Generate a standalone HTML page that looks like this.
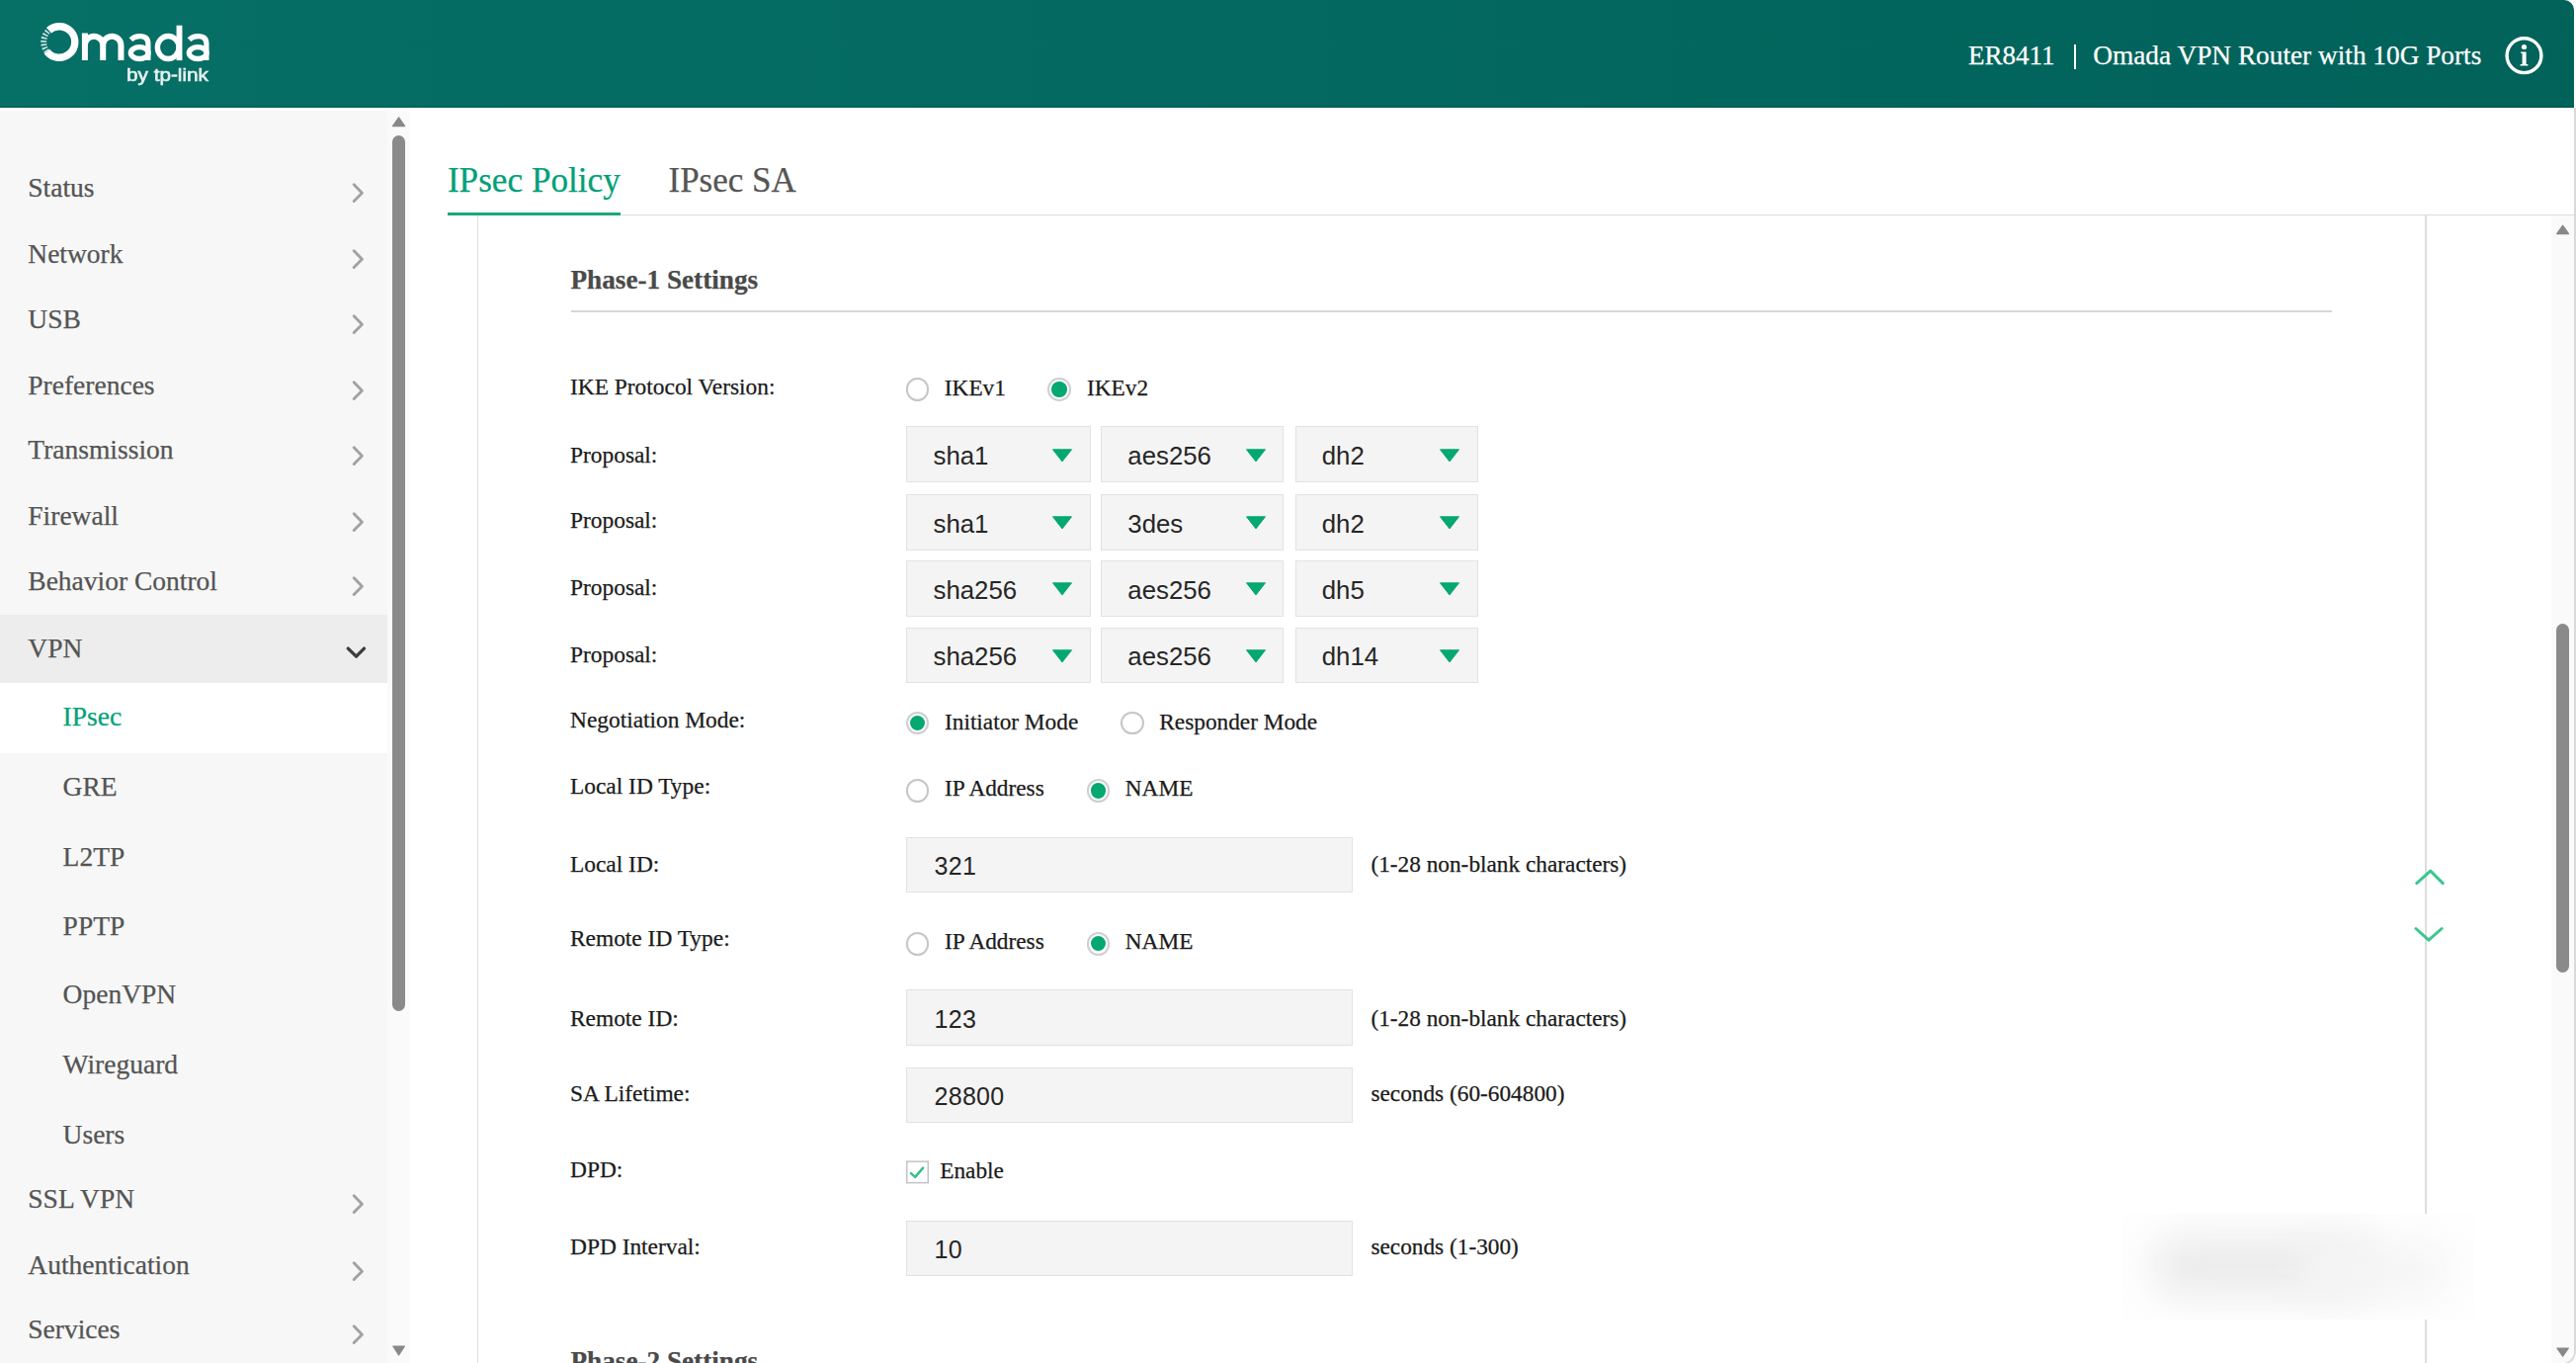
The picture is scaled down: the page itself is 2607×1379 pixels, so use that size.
<!DOCTYPE html>
<html><head><meta charset="utf-8"><title>Omada IPsec</title>
<style>
html,body{margin:0;padding:0;width:2607px;height:1379px;overflow:hidden;background:#fff}
.t{position:absolute;white-space:nowrap;-webkit-text-stroke:0.25px currentColor}
.b{position:absolute}
</style></head><body>
<div class="b" style="left:0.00px;top:0.00px;width:2607.00px;height:1379.00px;background:#fff"></div>
<div class="b" style="left:0.00px;top:0.00px;width:2605.00px;height:109.40px;background:linear-gradient(to right,#066f66,#01625a);border-top-right-radius:10px"></div>
<div class="b" style="left:0.00px;top:107.20px;width:2605.00px;height:2.20px;background:rgba(0,50,40,0.13)"></div>
<svg class="b" style="left:0;top:0" width="240" height="109" viewBox="0 0 240 109">
<g fill="none" stroke="#fff">
 <path d="M 49.43 30.76 A 15.8 15.8 0 1 1 47.55 52.23" stroke-width="7.4"/>
 <path d="M 47.55 52.23 A 15.8 15.8 0 0 1 49.43 30.76" stroke-width="6.0" stroke-dasharray="1.7 1.7" opacity="0.8"/>
 <path d="M 85.9 61.1 V 33.4 M 85.9 45.8 A 9.15 9.15 0 0 1 104.2 45.8 V 61.1 M 104.2 45.8 A 9.12 9.12 0 0 1 122.45 45.8 V 61.1" stroke-width="6.0"/>
 <path d="M 132.4 40.2 Q 136 36.7 141.5 36.7 Q 149.9 36.7 149.9 44.5 V 61.1" stroke-width="5.2"/>
 <ellipse cx="141.2" cy="53.6" rx="8.9" ry="5.9" stroke-width="5.3"/>
 <ellipse cx="170.2" cy="48.0" rx="10.8" ry="11.5" stroke-width="5.4"/>
 <path d="M 181.5 25.7 V 61.1" stroke-width="5.9"/>
 <path d="M 191.4 40.2 Q 195 36.7 200.5 36.7 Q 208.9 36.7 208.9 44.5 V 61.1" stroke-width="5.2"/>
 <ellipse cx="200.2" cy="53.6" rx="8.9" ry="5.9" stroke-width="5.3"/>
</g>
<text x="128" y="82.3" font-family="Liberation Sans, sans-serif" font-size="18" font-weight="normal" fill="#fff" stroke="#fff" stroke-width="0.6" textLength="83" lengthAdjust="spacingAndGlyphs" opacity="0.9">by tp-link</text>
</svg>
<div class="t" style="left:1992.00px;top:42.99px;font-size:27.0px;line-height:27.0px;color:#fff;font-family:'Liberation Serif', serif;font-weight:normal;">ER8411</div>
<div class="b" style="left:2099.30px;top:45.40px;width:2.00px;height:24.60px;background:#fff"></div>
<div class="t" style="left:2118.30px;top:42.74px;font-size:27.3px;line-height:27.3px;color:#fff;font-family:'Liberation Serif', serif;font-weight:normal;">Omada VPN Router with 10G Ports</div>
<svg class="b" style="left:2530px;top:32px" width="50" height="50" viewBox="0 0 50 50">
<circle cx="24.5" cy="24.2" r="17.4" fill="none" stroke="#fff" stroke-width="3.4"/>
<circle cx="24.5" cy="15.5" r="2.6" fill="#fff"/>
<path d="M 21.2 20.6 H 26.6 V 33.1 H 28.4 V 34.6 H 20.6 V 33.1 H 22.6 V 22.1 H 21.2 Z" fill="#fff"/>
</svg>
<div class="b" style="left:0.00px;top:112.00px;width:392.00px;height:1267.00px;background:#f7f7f7"></div>
<div class="b" style="left:392.00px;top:112.00px;width:23.00px;height:1267.00px;background:#fafafa"></div>
<div class="t" style="left:28.30px;top:176.17px;font-size:27.5px;line-height:27.5px;color:#545454;font-family:'Liberation Serif', serif;font-weight:normal;">Status</div>
<svg class="b" style="left:350px;top:181.30px" width="24" height="28" viewBox="0 0 24 28"><path d="M 8.2 5.7 L 16.4 14.2 L 8.2 22.5" fill="none" stroke="#a2a2a2" stroke-width="2.9" stroke-linecap="round" stroke-linejoin="round"/></svg>
<div class="t" style="left:28.30px;top:243.07px;font-size:27.5px;line-height:27.5px;color:#545454;font-family:'Liberation Serif', serif;font-weight:normal;">Network</div>
<svg class="b" style="left:350px;top:248.20px" width="24" height="28" viewBox="0 0 24 28"><path d="M 8.2 5.7 L 16.4 14.2 L 8.2 22.5" fill="none" stroke="#a2a2a2" stroke-width="2.9" stroke-linecap="round" stroke-linejoin="round"/></svg>
<div class="t" style="left:28.30px;top:308.77px;font-size:27.5px;line-height:27.5px;color:#545454;font-family:'Liberation Serif', serif;font-weight:normal;">USB</div>
<svg class="b" style="left:350px;top:313.90px" width="24" height="28" viewBox="0 0 24 28"><path d="M 8.2 5.7 L 16.4 14.2 L 8.2 22.5" fill="none" stroke="#a2a2a2" stroke-width="2.9" stroke-linecap="round" stroke-linejoin="round"/></svg>
<div class="t" style="left:28.30px;top:375.67px;font-size:27.5px;line-height:27.5px;color:#545454;font-family:'Liberation Serif', serif;font-weight:normal;">Preferences</div>
<svg class="b" style="left:350px;top:380.80px" width="24" height="28" viewBox="0 0 24 28"><path d="M 8.2 5.7 L 16.4 14.2 L 8.2 22.5" fill="none" stroke="#a2a2a2" stroke-width="2.9" stroke-linecap="round" stroke-linejoin="round"/></svg>
<div class="t" style="left:28.30px;top:441.47px;font-size:27.5px;line-height:27.5px;color:#545454;font-family:'Liberation Serif', serif;font-weight:normal;">Transmission</div>
<svg class="b" style="left:350px;top:446.60px" width="24" height="28" viewBox="0 0 24 28"><path d="M 8.2 5.7 L 16.4 14.2 L 8.2 22.5" fill="none" stroke="#a2a2a2" stroke-width="2.9" stroke-linecap="round" stroke-linejoin="round"/></svg>
<div class="t" style="left:28.30px;top:508.37px;font-size:27.5px;line-height:27.5px;color:#545454;font-family:'Liberation Serif', serif;font-weight:normal;">Firewall</div>
<svg class="b" style="left:350px;top:513.50px" width="24" height="28" viewBox="0 0 24 28"><path d="M 8.2 5.7 L 16.4 14.2 L 8.2 22.5" fill="none" stroke="#a2a2a2" stroke-width="2.9" stroke-linecap="round" stroke-linejoin="round"/></svg>
<div class="t" style="left:28.30px;top:573.67px;font-size:27.5px;line-height:27.5px;color:#545454;font-family:'Liberation Serif', serif;font-weight:normal;">Behavior Control</div>
<svg class="b" style="left:350px;top:578.80px" width="24" height="28" viewBox="0 0 24 28"><path d="M 8.2 5.7 L 16.4 14.2 L 8.2 22.5" fill="none" stroke="#a2a2a2" stroke-width="2.9" stroke-linecap="round" stroke-linejoin="round"/></svg>
<div class="b" style="left:0.00px;top:621.50px;width:392.00px;height:69.80px;background:#ededed"></div>
<div class="t" style="left:28.30px;top:641.67px;font-size:27.5px;line-height:27.5px;color:#545454;font-family:'Liberation Serif', serif;font-weight:normal;">VPN</div>
<svg class="b" style="left:340px;top:640px" width="40" height="40" viewBox="0 0 40 40"><path d="M 12.3 16.1 L 20.5 24.1 L 28.5 16.1" fill="none" stroke="#3d3d3d" stroke-width="3.4" stroke-linecap="round" stroke-linejoin="round"/></svg>
<div class="b" style="left:0.00px;top:691.30px;width:392.00px;height:70.40px;background:#fff"></div>
<div class="t" style="left:63.60px;top:710.97px;font-size:27.5px;line-height:27.5px;color:#00a27a;font-family:'Liberation Serif', serif;font-weight:normal;">IPsec</div>
<div class="t" style="left:63.60px;top:781.87px;font-size:27.5px;line-height:27.5px;color:#545454;font-family:'Liberation Serif', serif;font-weight:normal;">GRE</div>
<div class="t" style="left:63.60px;top:852.57px;font-size:27.5px;line-height:27.5px;color:#545454;font-family:'Liberation Serif', serif;font-weight:normal;">L2TP</div>
<div class="t" style="left:63.60px;top:922.97px;font-size:27.5px;line-height:27.5px;color:#545454;font-family:'Liberation Serif', serif;font-weight:normal;">PPTP</div>
<div class="t" style="left:63.60px;top:992.27px;font-size:27.5px;line-height:27.5px;color:#545454;font-family:'Liberation Serif', serif;font-weight:normal;">OpenVPN</div>
<div class="t" style="left:63.60px;top:1062.67px;font-size:27.5px;line-height:27.5px;color:#545454;font-family:'Liberation Serif', serif;font-weight:normal;">Wireguard</div>
<div class="t" style="left:63.60px;top:1133.57px;font-size:27.5px;line-height:27.5px;color:#545454;font-family:'Liberation Serif', serif;font-weight:normal;">Users</div>
<div class="t" style="left:28.30px;top:1199.07px;font-size:27.5px;line-height:27.5px;color:#545454;font-family:'Liberation Serif', serif;font-weight:normal;">SSL VPN</div>
<svg class="b" style="left:350px;top:1204.40px" width="24" height="28" viewBox="0 0 24 28"><path d="M 8.2 5.7 L 16.4 14.2 L 8.2 22.5" fill="none" stroke="#a2a2a2" stroke-width="2.9" stroke-linecap="round" stroke-linejoin="round"/></svg>
<div class="t" style="left:28.30px;top:1266.17px;font-size:27.5px;line-height:27.5px;color:#545454;font-family:'Liberation Serif', serif;font-weight:normal;">Authentication</div>
<svg class="b" style="left:350px;top:1271.50px" width="24" height="28" viewBox="0 0 24 28"><path d="M 8.2 5.7 L 16.4 14.2 L 8.2 22.5" fill="none" stroke="#a2a2a2" stroke-width="2.9" stroke-linecap="round" stroke-linejoin="round"/></svg>
<div class="t" style="left:28.30px;top:1331.07px;font-size:27.5px;line-height:27.5px;color:#545454;font-family:'Liberation Serif', serif;font-weight:normal;">Services</div>
<svg class="b" style="left:350px;top:1336.40px" width="24" height="28" viewBox="0 0 24 28"><path d="M 8.2 5.7 L 16.4 14.2 L 8.2 22.5" fill="none" stroke="#a2a2a2" stroke-width="2.9" stroke-linecap="round" stroke-linejoin="round"/></svg>
<svg class="b" style="left:392px;top:112px" width="23" height="1267" viewBox="0 0 23 1267"><path d="M 5.5 15.6 L 11.6 6.8 L 17.7 15.6 Z" fill="#888" stroke="#888" stroke-width="1.2" stroke-linejoin="round"/><path d="M 5.8 1250 L 11.6 1259 L 17.4 1250 Z" fill="#888" stroke="#888" stroke-width="1.2" stroke-linejoin="round"/></svg>
<div class="b" style="left:396.80px;top:137.30px;width:13.70px;height:885.30px;background:#8a8a8a;border-radius:7px"></div>
<div class="t" style="left:452.90px;top:165.22px;font-size:35.2px;line-height:35.2px;color:#00a07a;font-family:'Liberation Serif', serif;font-weight:normal;">IPsec Policy</div>
<div class="t" style="left:676.50px;top:165.39px;font-size:35.0px;line-height:35.0px;color:#555;font-family:'Liberation Serif', serif;font-weight:normal;">IPsec SA</div>
<div class="b" style="left:452.90px;top:216.80px;width:2152.10px;height:1.50px;background:#ddd"></div>
<div class="b" style="left:452.90px;top:215.00px;width:174.80px;height:2.80px;background:#1aa87a"></div>
<div class="b" style="left:482.60px;top:218.30px;width:1.80px;height:1160.70px;background:#dedede"></div>
<div class="b" style="left:2454.00px;top:218.30px;width:1.80px;height:1160.70px;background:#dedede"></div>
<div class="t" style="left:577.50px;top:270.02px;font-size:27.2px;line-height:27.2px;color:#4a4a4a;font-family:'Liberation Serif', serif;font-weight:bold;">Phase-1 Settings</div>
<div class="b" style="left:577.50px;top:313.60px;width:1782.50px;height:2.00px;background:#d7d7d7"></div>
<div class="t" style="left:577.00px;top:379.90px;font-size:23.4px;line-height:23.4px;color:#1b1b1b;font-family:'Liberation Serif', serif;font-weight:normal;">IKE Protocol Version:</div>
<div class="b" style="left:916.80px;top:382.40px;width:19.6px;height:19.6px;border:2px solid #c6c6c6;border-radius:50%;background:#fff"></div>
<div class="t" style="left:955.80px;top:380.99px;font-size:23.3px;line-height:23.3px;color:#1b1b1b;font-family:'Liberation Serif', serif;font-weight:normal;">IKEv1</div>
<div class="b" style="left:1060.40px;top:382.40px;width:19.6px;height:19.6px;border:2px solid #cfcfcf;border-radius:50%;background:#fff"><div class="b" style="left:2.1px;top:2.1px;width:15.4px;height:15.4px;border-radius:50%;background:#04a870"></div></div>
<div class="t" style="left:1100.00px;top:380.99px;font-size:23.3px;line-height:23.3px;color:#1b1b1b;font-family:'Liberation Serif', serif;font-weight:normal;">IKEv2</div>
<div class="t" style="left:577.00px;top:448.60px;font-size:23.4px;line-height:23.4px;color:#1b1b1b;font-family:'Liberation Serif', serif;font-weight:normal;">Proposal:</div>
<div class="b" style="left:917.40px;top:431.30px;width:186.40px;height:56.60px;background:#f4f4f4;border:1.3px solid #e2e2e2;box-sizing:border-box"></div>
<div class="t" style="left:944.50px;top:449.06px;font-size:25.8px;line-height:25.8px;color:#262626;font-family:'Liberation Sans', sans-serif;font-weight:normal;-webkit-text-stroke:0;">sha1</div>
<svg class="b" style="left:1064.30px;top:452.50px" width="22" height="16" viewBox="0 0 22 16"><path d="M 1.5 1.8 L 20.5 1.8 L 11 13.9 Z" fill="#04a870" stroke="#04a870" stroke-width="1" stroke-linejoin="round"/></svg>
<div class="b" style="left:1114.20px;top:431.30px;width:184.90px;height:56.60px;background:#f4f4f4;border:1.3px solid #e2e2e2;box-sizing:border-box"></div>
<div class="t" style="left:1141.30px;top:449.06px;font-size:25.8px;line-height:25.8px;color:#262626;font-family:'Liberation Sans', sans-serif;font-weight:normal;-webkit-text-stroke:0;">aes256</div>
<svg class="b" style="left:1259.60px;top:452.50px" width="22" height="16" viewBox="0 0 22 16"><path d="M 1.5 1.8 L 20.5 1.8 L 11 13.9 Z" fill="#04a870" stroke="#04a870" stroke-width="1" stroke-linejoin="round"/></svg>
<div class="b" style="left:1310.60px;top:431.30px;width:185.10px;height:56.60px;background:#f4f4f4;border:1.3px solid #e2e2e2;box-sizing:border-box"></div>
<div class="t" style="left:1337.70px;top:449.06px;font-size:25.8px;line-height:25.8px;color:#262626;font-family:'Liberation Sans', sans-serif;font-weight:normal;-webkit-text-stroke:0;">dh2</div>
<svg class="b" style="left:1456.20px;top:452.50px" width="22" height="16" viewBox="0 0 22 16"><path d="M 1.5 1.8 L 20.5 1.8 L 11 13.9 Z" fill="#04a870" stroke="#04a870" stroke-width="1" stroke-linejoin="round"/></svg>
<div class="t" style="left:577.00px;top:515.40px;font-size:23.4px;line-height:23.4px;color:#1b1b1b;font-family:'Liberation Serif', serif;font-weight:normal;">Proposal:</div>
<div class="b" style="left:917.40px;top:500.10px;width:186.40px;height:56.60px;background:#f4f4f4;border:1.3px solid #e2e2e2;box-sizing:border-box"></div>
<div class="t" style="left:944.50px;top:517.86px;font-size:25.8px;line-height:25.8px;color:#262626;font-family:'Liberation Sans', sans-serif;font-weight:normal;-webkit-text-stroke:0;">sha1</div>
<svg class="b" style="left:1064.30px;top:521.30px" width="22" height="16" viewBox="0 0 22 16"><path d="M 1.5 1.8 L 20.5 1.8 L 11 13.9 Z" fill="#04a870" stroke="#04a870" stroke-width="1" stroke-linejoin="round"/></svg>
<div class="b" style="left:1114.20px;top:500.10px;width:184.90px;height:56.60px;background:#f4f4f4;border:1.3px solid #e2e2e2;box-sizing:border-box"></div>
<div class="t" style="left:1141.30px;top:517.86px;font-size:25.8px;line-height:25.8px;color:#262626;font-family:'Liberation Sans', sans-serif;font-weight:normal;-webkit-text-stroke:0;">3des</div>
<svg class="b" style="left:1259.60px;top:521.30px" width="22" height="16" viewBox="0 0 22 16"><path d="M 1.5 1.8 L 20.5 1.8 L 11 13.9 Z" fill="#04a870" stroke="#04a870" stroke-width="1" stroke-linejoin="round"/></svg>
<div class="b" style="left:1310.60px;top:500.10px;width:185.10px;height:56.60px;background:#f4f4f4;border:1.3px solid #e2e2e2;box-sizing:border-box"></div>
<div class="t" style="left:1337.70px;top:517.86px;font-size:25.8px;line-height:25.8px;color:#262626;font-family:'Liberation Sans', sans-serif;font-weight:normal;-webkit-text-stroke:0;">dh2</div>
<svg class="b" style="left:1456.20px;top:521.30px" width="22" height="16" viewBox="0 0 22 16"><path d="M 1.5 1.8 L 20.5 1.8 L 11 13.9 Z" fill="#04a870" stroke="#04a870" stroke-width="1" stroke-linejoin="round"/></svg>
<div class="t" style="left:577.00px;top:583.10px;font-size:23.4px;line-height:23.4px;color:#1b1b1b;font-family:'Liberation Serif', serif;font-weight:normal;">Proposal:</div>
<div class="b" style="left:917.40px;top:567.20px;width:186.40px;height:56.60px;background:#f4f4f4;border:1.3px solid #e2e2e2;box-sizing:border-box"></div>
<div class="t" style="left:944.50px;top:584.96px;font-size:25.8px;line-height:25.8px;color:#262626;font-family:'Liberation Sans', sans-serif;font-weight:normal;-webkit-text-stroke:0;">sha256</div>
<svg class="b" style="left:1064.30px;top:588.40px" width="22" height="16" viewBox="0 0 22 16"><path d="M 1.5 1.8 L 20.5 1.8 L 11 13.9 Z" fill="#04a870" stroke="#04a870" stroke-width="1" stroke-linejoin="round"/></svg>
<div class="b" style="left:1114.20px;top:567.20px;width:184.90px;height:56.60px;background:#f4f4f4;border:1.3px solid #e2e2e2;box-sizing:border-box"></div>
<div class="t" style="left:1141.30px;top:584.96px;font-size:25.8px;line-height:25.8px;color:#262626;font-family:'Liberation Sans', sans-serif;font-weight:normal;-webkit-text-stroke:0;">aes256</div>
<svg class="b" style="left:1259.60px;top:588.40px" width="22" height="16" viewBox="0 0 22 16"><path d="M 1.5 1.8 L 20.5 1.8 L 11 13.9 Z" fill="#04a870" stroke="#04a870" stroke-width="1" stroke-linejoin="round"/></svg>
<div class="b" style="left:1310.60px;top:567.20px;width:185.10px;height:56.60px;background:#f4f4f4;border:1.3px solid #e2e2e2;box-sizing:border-box"></div>
<div class="t" style="left:1337.70px;top:584.96px;font-size:25.8px;line-height:25.8px;color:#262626;font-family:'Liberation Sans', sans-serif;font-weight:normal;-webkit-text-stroke:0;">dh5</div>
<svg class="b" style="left:1456.20px;top:588.40px" width="22" height="16" viewBox="0 0 22 16"><path d="M 1.5 1.8 L 20.5 1.8 L 11 13.9 Z" fill="#04a870" stroke="#04a870" stroke-width="1" stroke-linejoin="round"/></svg>
<div class="t" style="left:577.00px;top:651.20px;font-size:23.4px;line-height:23.4px;color:#1b1b1b;font-family:'Liberation Serif', serif;font-weight:normal;">Proposal:</div>
<div class="b" style="left:917.40px;top:634.60px;width:186.40px;height:56.60px;background:#f4f4f4;border:1.3px solid #e2e2e2;box-sizing:border-box"></div>
<div class="t" style="left:944.50px;top:652.36px;font-size:25.8px;line-height:25.8px;color:#262626;font-family:'Liberation Sans', sans-serif;font-weight:normal;-webkit-text-stroke:0;">sha256</div>
<svg class="b" style="left:1064.30px;top:655.80px" width="22" height="16" viewBox="0 0 22 16"><path d="M 1.5 1.8 L 20.5 1.8 L 11 13.9 Z" fill="#04a870" stroke="#04a870" stroke-width="1" stroke-linejoin="round"/></svg>
<div class="b" style="left:1114.20px;top:634.60px;width:184.90px;height:56.60px;background:#f4f4f4;border:1.3px solid #e2e2e2;box-sizing:border-box"></div>
<div class="t" style="left:1141.30px;top:652.36px;font-size:25.8px;line-height:25.8px;color:#262626;font-family:'Liberation Sans', sans-serif;font-weight:normal;-webkit-text-stroke:0;">aes256</div>
<svg class="b" style="left:1259.60px;top:655.80px" width="22" height="16" viewBox="0 0 22 16"><path d="M 1.5 1.8 L 20.5 1.8 L 11 13.9 Z" fill="#04a870" stroke="#04a870" stroke-width="1" stroke-linejoin="round"/></svg>
<div class="b" style="left:1310.60px;top:634.60px;width:185.10px;height:56.60px;background:#f4f4f4;border:1.3px solid #e2e2e2;box-sizing:border-box"></div>
<div class="t" style="left:1337.70px;top:652.36px;font-size:25.8px;line-height:25.8px;color:#262626;font-family:'Liberation Sans', sans-serif;font-weight:normal;-webkit-text-stroke:0;">dh14</div>
<svg class="b" style="left:1456.20px;top:655.80px" width="22" height="16" viewBox="0 0 22 16"><path d="M 1.5 1.8 L 20.5 1.8 L 11 13.9 Z" fill="#04a870" stroke="#04a870" stroke-width="1" stroke-linejoin="round"/></svg>
<div class="t" style="left:577.00px;top:717.40px;font-size:23.4px;line-height:23.4px;color:#1b1b1b;font-family:'Liberation Serif', serif;font-weight:normal;">Negotiation Mode:</div>
<div class="b" style="left:916.60px;top:719.80px;width:19.6px;height:19.6px;border:2px solid #cfcfcf;border-radius:50%;background:#fff"><div class="b" style="left:2.1px;top:2.1px;width:15.4px;height:15.4px;border-radius:50%;background:#04a870"></div></div>
<div class="t" style="left:956.00px;top:719.29px;font-size:23.3px;line-height:23.3px;color:#1b1b1b;font-family:'Liberation Serif', serif;font-weight:normal;">Initiator Mode</div>
<div class="b" style="left:1134.00px;top:719.80px;width:19.6px;height:19.6px;border:2px solid #c6c6c6;border-radius:50%;background:#fff"></div>
<div class="t" style="left:1173.30px;top:719.29px;font-size:23.3px;line-height:23.3px;color:#1b1b1b;font-family:'Liberation Serif', serif;font-weight:normal;">Responder Mode</div>
<div class="t" style="left:577.00px;top:784.10px;font-size:23.4px;line-height:23.4px;color:#1b1b1b;font-family:'Liberation Serif', serif;font-weight:normal;">Local ID Type:</div>
<div class="b" style="left:916.60px;top:788.40px;width:19.6px;height:19.6px;border:2px solid #c6c6c6;border-radius:50%;background:#fff"></div>
<div class="t" style="left:956.00px;top:786.29px;font-size:23.3px;line-height:23.3px;color:#1b1b1b;font-family:'Liberation Serif', serif;font-weight:normal;">IP Address</div>
<div class="b" style="left:1099.80px;top:788.40px;width:19.6px;height:19.6px;border:2px solid #cfcfcf;border-radius:50%;background:#fff"><div class="b" style="left:2.1px;top:2.1px;width:15.4px;height:15.4px;border-radius:50%;background:#04a870"></div></div>
<div class="t" style="left:1138.80px;top:786.29px;font-size:23.3px;line-height:23.3px;color:#1b1b1b;font-family:'Liberation Serif', serif;font-weight:normal;">NAME</div>
<div class="t" style="left:577.00px;top:863.10px;font-size:23.4px;line-height:23.4px;color:#1b1b1b;font-family:'Liberation Serif', serif;font-weight:normal;">Local ID:</div>
<div class="b" style="left:917.30px;top:846.70px;width:451.90px;height:56.70px;background:#f4f4f4;border:1.3px solid #e2e2e2;box-sizing:border-box"></div>
<div class="t" style="left:945.50px;top:863.94px;font-size:25.0px;line-height:25.0px;color:#262626;font-family:'Liberation Sans', sans-serif;font-weight:normal;-webkit-text-stroke:0;letter-spacing:0.3px;">321</div>
<div class="t" style="left:1387.40px;top:863.19px;font-size:23.3px;line-height:23.3px;color:#1b1b1b;font-family:'Liberation Serif', serif;font-weight:normal;">(1-28 non-blank characters)</div>
<div class="t" style="left:577.00px;top:938.10px;font-size:23.4px;line-height:23.4px;color:#1b1b1b;font-family:'Liberation Serif', serif;font-weight:normal;">Remote ID Type:</div>
<div class="b" style="left:916.60px;top:943.00px;width:19.6px;height:19.6px;border:2px solid #c6c6c6;border-radius:50%;background:#fff"></div>
<div class="t" style="left:956.00px;top:940.99px;font-size:23.3px;line-height:23.3px;color:#1b1b1b;font-family:'Liberation Serif', serif;font-weight:normal;">IP Address</div>
<div class="b" style="left:1099.80px;top:943.00px;width:19.6px;height:19.6px;border:2px solid #cfcfcf;border-radius:50%;background:#fff"><div class="b" style="left:2.1px;top:2.1px;width:15.4px;height:15.4px;border-radius:50%;background:#04a870"></div></div>
<div class="t" style="left:1138.80px;top:940.99px;font-size:23.3px;line-height:23.3px;color:#1b1b1b;font-family:'Liberation Serif', serif;font-weight:normal;">NAME</div>
<div class="t" style="left:577.00px;top:1018.90px;font-size:23.4px;line-height:23.4px;color:#1b1b1b;font-family:'Liberation Serif', serif;font-weight:normal;">Remote ID:</div>
<div class="b" style="left:917.30px;top:1001.40px;width:451.90px;height:56.40px;background:#f4f4f4;border:1.3px solid #e2e2e2;box-sizing:border-box"></div>
<div class="t" style="left:945.50px;top:1018.64px;font-size:25.0px;line-height:25.0px;color:#262626;font-family:'Liberation Sans', sans-serif;font-weight:normal;-webkit-text-stroke:0;letter-spacing:0.3px;">123</div>
<div class="t" style="left:1387.40px;top:1018.99px;font-size:23.3px;line-height:23.3px;color:#1b1b1b;font-family:'Liberation Serif', serif;font-weight:normal;">(1-28 non-blank characters)</div>
<div class="t" style="left:577.00px;top:1095.10px;font-size:23.4px;line-height:23.4px;color:#1b1b1b;font-family:'Liberation Serif', serif;font-weight:normal;">SA Lifetime:</div>
<div class="b" style="left:917.30px;top:1079.80px;width:451.90px;height:55.80px;background:#f4f4f4;border:1.3px solid #e2e2e2;box-sizing:border-box"></div>
<div class="t" style="left:945.50px;top:1097.04px;font-size:25.0px;line-height:25.0px;color:#262626;font-family:'Liberation Sans', sans-serif;font-weight:normal;-webkit-text-stroke:0;letter-spacing:0.3px;">28800</div>
<div class="t" style="left:1387.40px;top:1095.19px;font-size:23.3px;line-height:23.3px;color:#1b1b1b;font-family:'Liberation Serif', serif;font-weight:normal;">seconds (60-604800)</div>
<div class="t" style="left:577.00px;top:1171.60px;font-size:23.4px;line-height:23.4px;color:#1b1b1b;font-family:'Liberation Serif', serif;font-weight:normal;">DPD:</div>
<svg class="b" style="left:915px;top:1172px" width="28" height="28" viewBox="0 0 28 28"><rect x="2.75" y="3.15" width="21.5" height="21.5" fill="#fff" stroke="#c3c3c7" stroke-width="1.5"/></svg>
<svg class="b" style="left:917px;top:1174px" width="24" height="24" viewBox="0 0 24 24"><path d="M 5.0 13.1 L 9.2 16.9 L 17.1 7.6" fill="none" stroke="#3cbf8a" stroke-width="2.5" stroke-linecap="round" stroke-linejoin="round"/></svg>
<div class="t" style="left:951.20px;top:1173.49px;font-size:23.3px;line-height:23.3px;color:#1b1b1b;font-family:'Liberation Serif', serif;font-weight:normal;">Enable</div>
<div class="t" style="left:577.00px;top:1249.50px;font-size:23.4px;line-height:23.4px;color:#1b1b1b;font-family:'Liberation Serif', serif;font-weight:normal;">DPD Interval:</div>
<div class="b" style="left:917.30px;top:1235.20px;width:451.90px;height:55.50px;background:#f4f4f4;border:1.3px solid #e2e2e2;box-sizing:border-box"></div>
<div class="t" style="left:945.50px;top:1252.44px;font-size:25.0px;line-height:25.0px;color:#262626;font-family:'Liberation Sans', sans-serif;font-weight:normal;-webkit-text-stroke:0;letter-spacing:0.3px;">10</div>
<div class="t" style="left:1387.40px;top:1249.59px;font-size:23.3px;line-height:23.3px;color:#1b1b1b;font-family:'Liberation Serif', serif;font-weight:normal;">seconds (1-300)</div>
<div class="t" style="left:577.50px;top:1364.02px;font-size:27.2px;line-height:27.2px;color:#4a4a4a;font-family:'Liberation Serif', serif;font-weight:bold;">Phase-2 Settings</div>
<svg class="b" style="left:2430px;top:865px" width="60" height="100" viewBox="0 0 60 100"><g fill="none" stroke="#2fc68a" stroke-width="3" stroke-linecap="round" stroke-linejoin="round" opacity="0.95"><path d="M 15.8 28.6 L 29.7 16.1 L 42.2 28.6"/><path d="M 15 74.5 L 27.9 86.2 L 41.1 74.5"/></g></svg>
<div class="b" style="left:2148px;top:1227.5px;width:356px;height:107.5px;background:#fefefe;overflow:hidden"><div class="b" style="left:30px;top:22px;width:230px;height:62px;background:#ececec;border-radius:30px;filter:blur(18px)"></div><div class="b" style="left:180px;top:30px;width:150px;height:55px;background:#f5f5f5;border-radius:26px;filter:blur(18px)"></div></div>
<div class="b" style="left:2582.00px;top:218.30px;width:23.00px;height:1160.70px;background:#fafafa"></div>
<svg class="b" style="left:2582px;top:218px" width="23" height="1161" viewBox="0 0 23 1161"><path d="M 5.6 18.6 L 11.6 10.2 L 17.6 18.6 Z" fill="#888" stroke="#888" stroke-width="1.2" stroke-linejoin="round"/><path d="M 5.8 1146 L 11.6 1154.2 L 17.4 1146 Z" fill="#888" stroke="#888" stroke-width="1.2" stroke-linejoin="round"/></svg>
<div class="b" style="left:2586.80px;top:631.00px;width:13.60px;height:352.50px;background:#8a8a8a;border-radius:7px"></div>
<div class="b" style="left:2605.00px;top:109.00px;width:2.00px;height:1257.00px;background:#d9d9d9"></div>
<svg class="b" style="left:2580px;top:1350px" width="27" height="29" viewBox="0 0 27 29"><path d="M 26 16 A 12 12 0 0 1 17 29" fill="none" stroke="#d9d9d9" stroke-width="1.8"/></svg>
</body></html>
